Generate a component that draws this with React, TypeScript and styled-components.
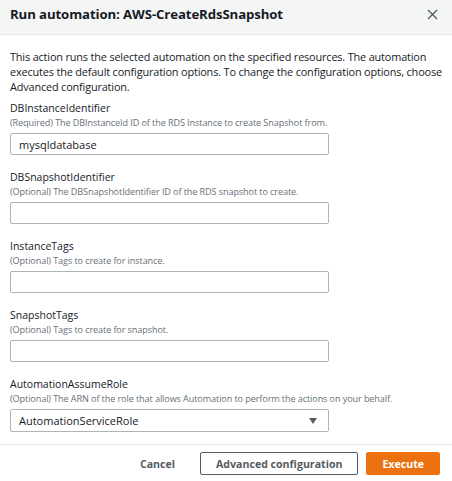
import styled, { createGlobalStyle } from "styled-components";

const GlobalStyle = createGlobalStyle`
  html, body {
    margin: 0;
    padding: 0;
    background: #ffffff;
  }
  body {
    font-family: "Open Sans", "Liberation Sans", sans-serif;
    color: #16191f;
  }
`;

const Modal = styled.div`
  width: 452px;
  height: 481px;
  box-sizing: border-box;
  background: #ffffff;
  overflow: hidden;
`;

const Header = styled.header`
  height: 35px;
  box-sizing: border-box;
  padding: 0 13px 6px 10px;
  display: flex;
  align-items: center;
  justify-content: space-between;
  background: #f4f5f5;
  border-bottom: 1px solid #e6e8e8;
`;

const Title = styled.h2`
  margin: 0;
  font-size: 13.2px;
  font-weight: 700;
  letter-spacing: -0.1px;
`;

const CloseButton = styled.button`
  border: 0;
  background: none;
  padding: 0;
  width: 14px;
  height: 14px;
  display: flex;
  align-items: center;
  justify-content: center;
  cursor: pointer;
`;

const Body = styled.div`
  padding: 14px 3px 12px 10px;
  display: flex;
  flex-direction: column;
  gap: 15px;
`;

const Intro = styled.p`
  margin: 0 0 -8px 0;
  font-size: 10.9px;
  line-height: 15px;
  letter-spacing: -0.16px;
`;

const Field = styled.div`
  display: flex;
  flex-direction: column;
`;

const Label = styled.label`
  font-size: 10.5px;
  line-height: 15px;
`;

const Hint = styled.span`
  font-size: 9.1px;
  line-height: 13px;
  color: #687078;
  letter-spacing: -0.1px;
`;

const TextInput = styled.input`
  margin-top: 4px;
  width: 319px;
  height: 22px;
  box-sizing: border-box;
  border: 1px solid #aab7b8;
  border-radius: 2px;
  padding: 0 8px;
  font-family: inherit;
  font-size: 11px;
  color: #16191f;
  background: #ffffff;
  outline: none;
`;

const Select = styled.div`
  margin-top: 4px;
  width: 319px;
  height: 23px;
  box-sizing: border-box;
  border: 1px solid #aab7b8;
  border-radius: 2px;
  padding: 0 11px 0 8px;
  display: flex;
  align-items: center;
  justify-content: space-between;
  font-size: 11px;
`;

const Caret = styled.span`
  width: 0;
  height: 0;
  border-left: 4px solid transparent;
  border-right: 4px solid transparent;
  border-top: 6px solid #545b64;
`;

const Footer = styled.footer`
  border-top: 1px solid #eaeded;
  padding: 7px 12px 0 0;
  display: flex;
  justify-content: flex-end;
  align-items: center;
  gap: 8px;
`;

const Button = styled.button<{ variant: "link" | "normal" | "primary" }>`
  height: 23px;
  box-sizing: border-box;
  font-family: inherit;
  font-size: 10.6px;
  font-weight: 700;
  border-radius: 2px;
  cursor: pointer;
  padding: 0 ${(p) => (p.variant === "link" ? "16px" : "15px")};
  border: 1px solid
    ${(p) =>
      p.variant === "normal"
        ? "#545b64"
        : p.variant === "primary"
        ? "#ec7211"
        : "transparent"};
  background: ${(p) => (p.variant === "primary" ? "#ec7211" : "#ffffff")};
  color: ${(p) => (p.variant === "primary" ? "#ffffff" : "#545b64")};
`;

const fields = [
  {
    name: "DBInstanceIdentifier",
    hint: "(Required) The DBInstanceId ID of the RDS Instance to create Snapshot from.",
    value: "mysqldatabase",
  },
  {
    name: "DBSnapshotIdentifier",
    hint: "(Optional) The DBSnapshotIdentifier ID of the RDS snapshot to create.",
    value: "",
  },
  {
    name: "InstanceTags",
    hint: "(Optional) Tags to create for instance.",
    value: "",
  },
  {
    name: "SnapshotTags",
    hint: "(Optional) Tags to create for snapshot.",
    value: "",
  },
];

export default function App() {
  return (
    <>
      <GlobalStyle />
      <Modal>
        <Header>
          <Title>Run automation: AWS-CreateRdsSnapshot</Title>
          <CloseButton aria-label="Close">
            <svg width="11" height="11" viewBox="0 0 11 11">
              <path
                d="M1 1 L10 10 M10 1 L1 10"
                stroke="#545b64"
                strokeWidth="1.4"
                fill="none"
              />
            </svg>
          </CloseButton>
        </Header>
        <Body>
          <Intro>
            This action runs the selected automation on the specified
            resources. The automation executes the default configuration
            options. To change the configuration options, choose Advanced
            configuration.
          </Intro>
          {fields.map((f) => (
            <Field key={f.name}>
              <Label>{f.name}</Label>
              <Hint>{f.hint}</Hint>
              <TextInput defaultValue={f.value} />
            </Field>
          ))}
          <Field>
            <Label>AutomationAssumeRole</Label>
            <Hint>
              (Optional) The ARN of the role that allows Automation to perform
              the actions on your behalf.
            </Hint>
            <Select>
              <span>AutomationServiceRole</span>
              <Caret />
            </Select>
          </Field>
        </Body>
        <Footer>
          <Button variant="link">Cancel</Button>
          <Button variant="normal">Advanced configuration</Button>
          <Button variant="primary">Execute</Button>
        </Footer>
      </Modal>
    </>
  );
}
